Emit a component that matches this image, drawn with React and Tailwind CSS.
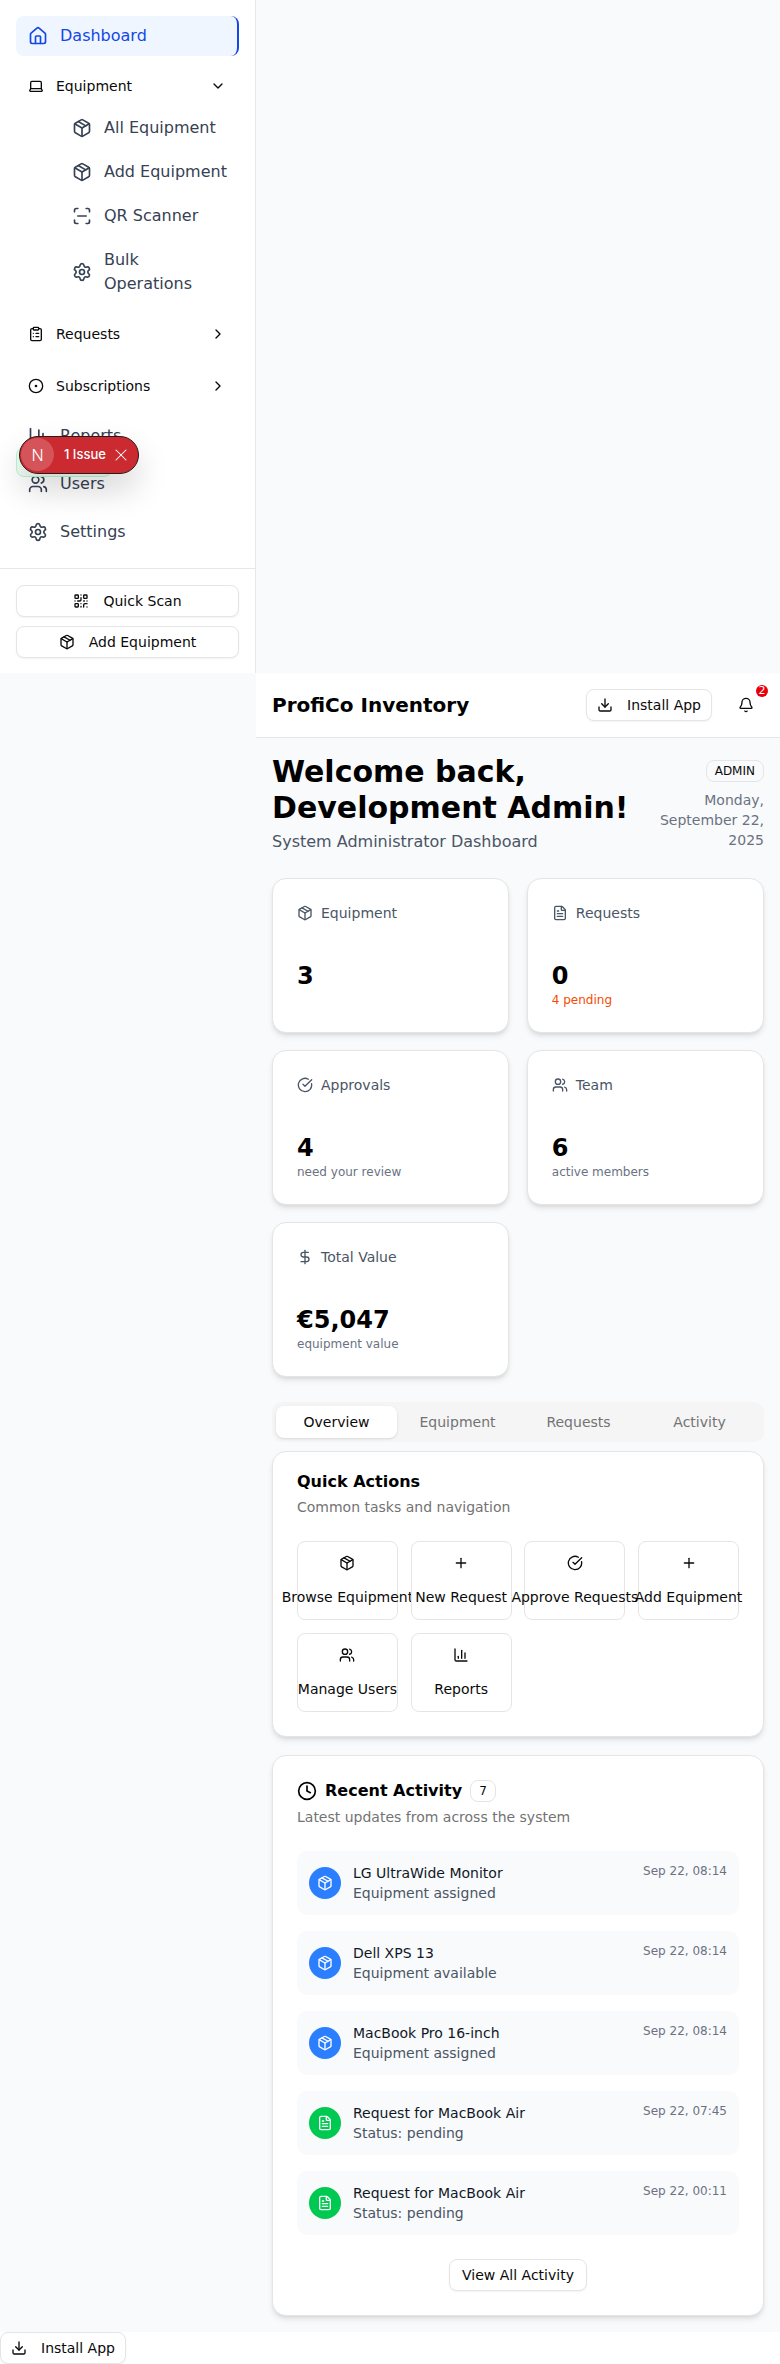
import {
  Home, Laptop, Package, ScanLine, Settings, ClipboardList, CircleDot, ChartColumn, Users, QrCode,
  Download, Bell, FileText, CircleCheckBig, DollarSign, Plus, Clock, ChevronDown, ChevronRight, X,
} from 'lucide-react';

const font = { fontFamily: '"DejaVu Sans", sans-serif' };

function SubItem({ icon: Icon, children, tall }) {
  return (
    <div className={`flex items-center gap-3 pl-[72px] pr-3 text-base text-gray-700 ${tall ? 'h-16' : 'h-10'}`}>
      <Icon className="w-5 h-5 shrink-0" />
      <span className="leading-6">{children}</span>
    </div>
  );
}

function GroupItem({ icon: Icon, label, open, className = '' }) {
  const Chevron = open ? ChevronDown : ChevronRight;
  return (
    <div className={`flex items-center h-10 pl-[28px] pr-[29px] text-sm text-neutral-950 ${className}`}>
      <Icon className="w-4 h-4 mr-3 shrink-0" />
      <span className="flex-1">{label}</span>
      <Chevron className="w-4 h-4" />
    </div>
  );
}

function NavItem({ icon: Icon, label, className = '' }) {
  return (
    <div className={`flex items-center gap-3 h-10 px-3 mx-4 text-base text-gray-700 ${className}`}>
      <Icon className="w-5 h-5 shrink-0" />
      <span>{label}</span>
    </div>
  );
}

function OutlineButton({ icon: Icon, children }) {
  return (
    <div className="flex items-center justify-center gap-[14px] h-8 rounded-lg border border-neutral-200 bg-white shadow-xs text-sm text-neutral-950">
      <Icon className="w-4 h-4" />
      <span>{children}</span>
    </div>
  );
}

function Sidebar() {
  return (
    <aside className="w-64 h-[673px] bg-white border-r border-gray-200 relative">
      <div className="pt-4 pb-4 border-b border-gray-200">
        <div className="flex items-center gap-3 h-10 px-3 mx-4 text-base text-blue-700 bg-blue-50 rounded-lg border-r-2 border-blue-700">
          <Home className="w-5 h-5" />
          <span>Dashboard</span>
        </div>
        <GroupItem icon={Laptop} label="Equipment" open className="mt-[10px]" />
        <div className="flex flex-col gap-1 mt-[2px]">
          <SubItem icon={Package}>All Equipment</SubItem>
          <SubItem icon={Package}>Add Equipment</SubItem>
          <SubItem icon={ScanLine}>QR Scanner</SubItem>
          <SubItem icon={Settings} tall>Bulk<br />Operations</SubItem>
        </div>
        <GroupItem icon={ClipboardList} label="Requests" className="mt-[10px]" />
        <GroupItem icon={CircleDot} label="Subscriptions" className="mt-3" />
        <NavItem icon={ChartColumn} label="Reports" className="mt-[10px]" />
        <NavItem icon={Users} label="Users" className="mt-2" />
        <NavItem icon={Settings} label="Settings" className="mt-2" />
      </div>
      <div className="px-4 pt-4 flex flex-col gap-[8.5px]">
        <OutlineButton icon={QrCode}>Quick Scan</OutlineButton>
        <OutlineButton icon={Package}>Add Equipment</OutlineButton>
      </div>

      {/* dev overlay sits on top of the nav */}
      <div className="absolute left-4 top-[447px] w-[96px] h-[30px] rounded-lg bg-green-50 border border-green-200" />
      <div className="absolute left-[19px] top-[436px] w-[120px] h-[37.5px] rounded-full bg-[#ca2a30] border border-[#2b1a1a] shadow-[0_16px_32px_rgba(0,0,0,0.16)] flex items-center text-white font-['Inter']">
        <div className="w-[33px] h-[33px] ml-[1px] rounded-full bg-white/20 flex items-center justify-center text-[16px] font-light">N</div>
        <span className="ml-[10px] text-[13px] font-medium">1 Issue</span>
        <X className="w-5 h-5 ml-[5px]" strokeWidth={1.25} />
      </div>
    </aside>
  );
}

function StatCard({ icon: Icon, label, value, sub, subClass = 'text-gray-500' }) {
  return (
    <div className="bg-white rounded-[14px] border border-neutral-200 shadow-md h-[155px] px-6 pt-6">
      <div className="flex items-center gap-2 text-sm text-gray-600 h-5">
        <Icon className="w-4 h-4 shrink-0" />
        <span>{label}</span>
      </div>
      <div className="mt-[37px] text-2xl font-bold text-black leading-8">{value}</div>
      {sub && <div className={`text-xs leading-4 ${subClass}`}>{sub}</div>}
    </div>
  );
}

function ActionButton({ icon: Icon, label }) {
  return (
    <div className="h-[79.2px] rounded-lg border border-neutral-200 bg-white flex flex-col items-center justify-center gap-4 whitespace-nowrap text-sm text-neutral-950">
      <Icon className="w-4 h-4 shrink-0" />
      <span className="leading-5">{label}</span>
    </div>
  );
}

function ActivityRow({ icon: Icon, color, title, status, time }) {
  return (
    <div className="flex items-center gap-3 h-16 px-3 rounded-[10px] bg-gray-50">
      <div className={`w-8 h-8 rounded-full flex items-center justify-center text-white shrink-0 ${color}`}>
        <Icon className="w-4 h-4" />
      </div>
      <div className="flex-1">
        <div className="text-sm leading-5 text-gray-900">{title}</div>
        <div className="text-sm leading-5 text-gray-600">{status}</div>
      </div>
      <div className="self-start mt-3 text-xs leading-4 text-gray-500">{time}</div>
    </div>
  );
}

const stats = [
  { icon: Package, label: 'Equipment', value: '3' },
  { icon: FileText, label: 'Requests', value: '0', sub: '4 pending', subClass: 'text-orange-600' },
  { icon: CircleCheckBig, label: 'Approvals', value: '4', sub: 'need your review' },
  { icon: Users, label: 'Team', value: '6', sub: 'active members' },
  { icon: DollarSign, label: 'Total Value', value: '€5,047', sub: 'equipment value' },
];

const actions = [
  { icon: Package, label: 'Browse Equipment' },
  { icon: Plus, label: 'New Request' },
  { icon: CircleCheckBig, label: 'Approve Requests' },
  { icon: Plus, label: 'Add Equipment' },
  { icon: Users, label: 'Manage Users' },
  { icon: ChartColumn, label: 'Reports' },
];

const activity = [
  { icon: Package, color: 'bg-blue-500', title: 'LG UltraWide Monitor', status: 'Equipment assigned', time: 'Sep 22, 08:14' },
  { icon: Package, color: 'bg-blue-500', title: 'Dell XPS 13', status: 'Equipment available', time: 'Sep 22, 08:14' },
  { icon: Package, color: 'bg-blue-500', title: 'MacBook Pro 16-inch', status: 'Equipment assigned', time: 'Sep 22, 08:14' },
  { icon: FileText, color: 'bg-green-500', title: 'Request for MacBook Air', status: 'Status: pending', time: 'Sep 22, 07:45' },
  { icon: FileText, color: 'bg-green-500', title: 'Request for MacBook Air', status: 'Status: pending', time: 'Sep 22, 00:11' },
];

function InstallButton() {
  return (
    <div className="inline-flex items-center gap-[14px] h-8 px-[10px] rounded-lg border border-neutral-200 bg-white shadow-xs text-sm text-neutral-950">
      <Download className="w-4 h-4" />
      <span>Install App</span>
    </div>
  );
}

function Main() {
  return (
    <main className="ml-64">
      <header className="h-[65px] bg-white border-b border-gray-200 flex items-center pl-4 pr-[18px]">
        <h1 className="flex-1 text-xl font-bold text-black">ProfiCo Inventory</h1>
        <InstallButton />
        <div className="relative ml-[26px] mr-[8px]">
          <Bell className="w-4 h-4 text-neutral-950" />
          <span className="absolute -top-3 -right-[14px] w-3 h-3 rounded-full bg-red-600 text-white text-[11px] leading-3 text-center">2</span>
        </div>
      </header>

      <div className="px-4 pt-4 pb-4">
        <div className="flex items-start justify-between">
          <div>
            <h2 className="text-3xl font-bold leading-9 text-black">Welcome back,<br />Development Admin!</h2>
            <p className="text-base leading-6 mt-1 text-gray-600">System Administrator Dashboard</p>
          </div>
          <div className="flex flex-col items-end gap-2 w-[110px] mt-[6px]">
            <span className="rounded-lg border border-neutral-200 px-2 h-[22px] flex items-center text-xs text-neutral-950">ADMIN</span>
            <span className="text-sm leading-5 text-gray-500 text-right">Monday, September 22, 2025</span>
          </div>
        </div>

        <div className="grid grid-cols-2 gap-x-[17.6px] gap-y-[17px] mt-6">
          {stats.map((s) => <StatCard key={s.label} {...s} />)}
        </div>

        <div className="mt-[25px] h-10 rounded-[10px] bg-[#f5f5f5] grid grid-cols-4 p-1 text-sm text-[#737373] text-center">
          <div className="rounded-lg bg-white shadow-sm text-neutral-950 flex items-center justify-center">Overview</div>
          <div className="flex items-center justify-center">Equipment</div>
          <div className="flex items-center justify-center">Requests</div>
          <div className="flex items-center justify-center">Activity</div>
        </div>

        <section className="mt-[9px] bg-white rounded-[14px] border border-neutral-200 shadow-md px-6 pt-5 pb-6">
          <h3 className="text-base font-bold leading-5 text-black">Quick Actions</h3>
          <p className="text-sm leading-5 mt-[5px] text-[#737373]">Common tasks and navigation</p>
          <div className="grid grid-cols-4 gap-[12.8px] mt-6">
            {actions.map((a) => <ActionButton key={a.label} {...a} />)}
          </div>
        </section>

        <section className="mt-[17.6px] bg-white rounded-[14px] border border-neutral-200 shadow-md p-6">
          <div className="flex items-center gap-2 h-[22px]">
            <Clock className="w-5 h-5 text-black" />
            <h3 className="text-base font-bold text-black">Recent Activity</h3>
            <span className="w-[26px] h-[22px] rounded-lg border border-neutral-200 flex items-center justify-center text-xs text-neutral-950">7</span>
          </div>
          <p className="text-sm leading-5 mt-[5px] text-[#737373]">Latest updates from across the system</p>
          <div className="flex flex-col gap-4 mt-6">
            {activity.map((a, i) => <ActivityRow key={i} {...a} />)}
          </div>
          <div className="flex justify-center mt-6">
            <div className="h-8 px-3 flex items-center rounded-lg border border-neutral-200 bg-white shadow-xs text-sm text-neutral-950">View All Activity</div>
          </div>
        </section>
      </div>
    </main>
  );
}

export default function App() {
  return (
    <div style={font} className="min-h-[2364px] bg-gray-50 flex flex-col">
      <Sidebar />
      <Main />
      <footer className="bg-white flex-1">
        <InstallButton />
      </footer>
    </div>
  );
}
